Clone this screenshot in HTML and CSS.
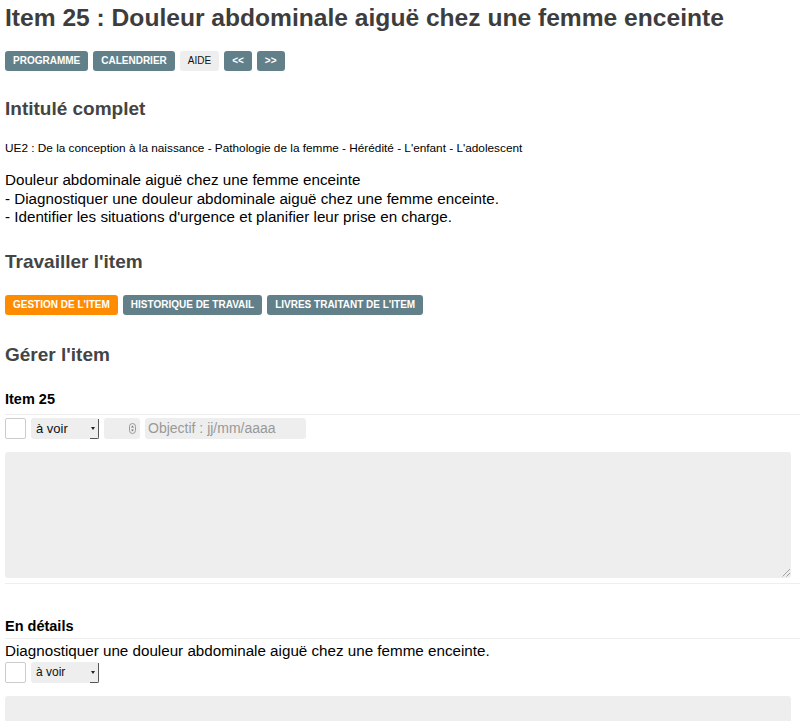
FILE: index.html
```html
<!DOCTYPE html>
<html lang="fr">
<head>
<meta charset="utf-8">
<title>Item 25</title>
<link rel="stylesheet" href="styles.css">
</head>
<body>
<div class="page">
  <h1 class="title">Item 25 : Douleur abdominale aiguë chez une femme enceinte</h1>
  <nav class="btnrow top">
    <a class="btn">Programme</a>
    <a class="btn">Calendrier</a>
    <a class="btn light">Aide</a>
    <a class="btn">&lt;&lt;</a>
    <a class="btn">&gt;&gt;</a>
  </nav>

  <h2 class="section first">Intitulé complet</h2>
  <p class="ue">UE2 : De la conception à la naissance - Pathologie de la femme - Hérédité - L'enfant - L'adolescent</p>
  <p class="desc">Douleur abdominale aiguë chez une femme enceinte<br>- Diagnostiquer une douleur abdominale aiguë chez une femme enceinte.<br>- Identifier les situations d'urgence et planifier leur prise en charge.</p>

  <h2 class="section work">Travailler l'item</h2>
  <nav class="btnrow second">
    <a class="btn orange">Gestion de l'item</a>
    <a class="btn">Historique de travail</a>
    <a class="btn">Livres traitant de l'item</a>
  </nav>

  <h2 class="section manage">Gérer l'item</h2>
  <h3 class="sub">Item 25</h3>
  <div class="controls">
    <span class="check"></span>
    <span class="select">à voir<span class="arrow"></span></span>
    <span class="number">
      <svg class="spin" width="7" height="11" viewBox="0 0 7 11"><rect x="0.5" y="0.5" width="6" height="10" rx="3" fill="none" stroke="#999"/><path d="M2 4.5 L3.5 2.6 L5 4.5 Z M2 6.5 L3.5 8.4 L5 6.5 Z" fill="#777"/></svg>
    </span>
    <span class="date">Objectif : jj/mm/aaaa</span>
  </div>
  <div class="textarea"><span class="grip"></span></div>
  <div class="rule"></div>

  <h3 class="sub detail">En détails</h3>
  <p class="obj">Diagnostiquer une douleur abdominale aiguë chez une femme enceinte.</p>
  <div class="controls small">
    <span class="check"></span>
    <span class="select">à voir<span class="arrow"></span></span>
  </div>
  <div class="textarea"></div>
</div>
</body>
</html>
```

FILE: styles.css
```css
html, body {
  margin: 0;
  padding: 0;
  background: #fff;
}
body {
  font-family: "Liberation Sans", Arial, Helvetica, sans-serif;
  color: #000;
  overflow: hidden;
}
.page {
  padding: 0 0 0 5px;
}
.title {
  font-size: 24.6px;
  font-weight: bold;
  color: #3d3d3d;
  margin: 0;
  padding-top: 4px;
  line-height: 28px;
}
.btnrow {
  display: flex;
  gap: 5px;
}
.btnrow.top {
  margin-top: 19px;
}
.btnrow.second {
  margin-top: 22px;
}
.btn {
  display: inline-block;
  height: 20px;
  line-height: 20px;
  padding: 0 8px;
  border-radius: 3px;
  background: #62808a;
  color: #fff;
  font-size: 10px;
  font-weight: bold;
  text-transform: uppercase;
}
.btn.light {
  background: #eee;
  color: #111;
  font-weight: normal;
}
.btn.orange {
  background: #ff8c00;
}
.section {
  font-size: 19px;
  font-weight: bold;
  color: #444;
  margin: 27px 0 0;
  line-height: 22px;
}
.section.work {
  margin-top: 24px;
}
.section.manage {
  margin-top: 29px;
}
.ue {
  font-size: 11.8px;
  margin: 21px 0 0;
  line-height: 14px;
}
.desc {
  font-size: 15.2px;
  line-height: 18.5px;
  margin: 16px 0 0;
}
.sub {
  font-size: 14.5px;
  font-weight: bold;
  margin: 25px 0 0;
  line-height: 17px;
  padding-bottom: 6px;
  border-bottom: 1px solid #eee;
}
.controls {
  display: flex;
  gap: 5px;
  margin-top: 3px;
}
.check {
  width: 19px;
  height: 19px;
  border: 1px solid #ccc;
  border-radius: 2px;
  background: #fff;
}
.select {
  position: relative;
  width: 68px;
  height: 21px;
  line-height: 21px;
  box-sizing: border-box;
  padding-left: 5px;
  background: #eee;
  border-radius: 3px;
  font-size: 13px;
  color: #111;
}
.arrow {
  position: absolute;
  right: 0;
  top: 1px;
  width: 8px;
  height: 19px;
  border-right: 1px solid #555;
  border-bottom: 1px solid #555;
  border-radius: 0 0 2px 0;
}
.arrow::after {
  content: "";
  position: absolute;
  left: 1px;
  top: 8px;
  border-left: 2.5px solid transparent;
  border-right: 2.5px solid transparent;
  border-top: 3px solid #222;
}
.number {
  display: flex;
  justify-content: flex-end;
  align-items: center;
  box-sizing: border-box;
  padding-right: 4px;
  width: 36px;
  height: 21px;
  background: #eee;
  border-radius: 3px;
}
.date {
  width: 161px;
  height: 21px;
  line-height: 21px;
  box-sizing: border-box;
  padding-left: 3px;
  background: #eee;
  border-radius: 3px;
  font-size: 14px;
  color: #999;
}
.textarea {
  position: relative;
  margin-top: 13px;
  width: 786px;
  height: 126px;
  background: #eee;
  border-radius: 3px;
}
.grip {
  position: absolute;
  right: 1px;
  bottom: 1px;
  width: 8px;
  height: 8px;
  background: repeating-linear-gradient(135deg, transparent 0 2px, #999 2px 3px);
  clip-path: polygon(100% 0, 100% 100%, 0 100%);
}
.rule {
  margin-top: 5px;
  height: 1px;
  background: #eee;
}
.sub.detail {
  margin-top: 34px;
  padding-bottom: 3px;
}
.obj {
  font-size: 15.2px;
  line-height: 17px;
  margin: 3px 0 0;
}
.controls.small {
  margin-top: 3px;
}
.controls.small .select {
  font-size: 12px;
}
.controls.small + .textarea {
  margin-top: 13px;
}
```
